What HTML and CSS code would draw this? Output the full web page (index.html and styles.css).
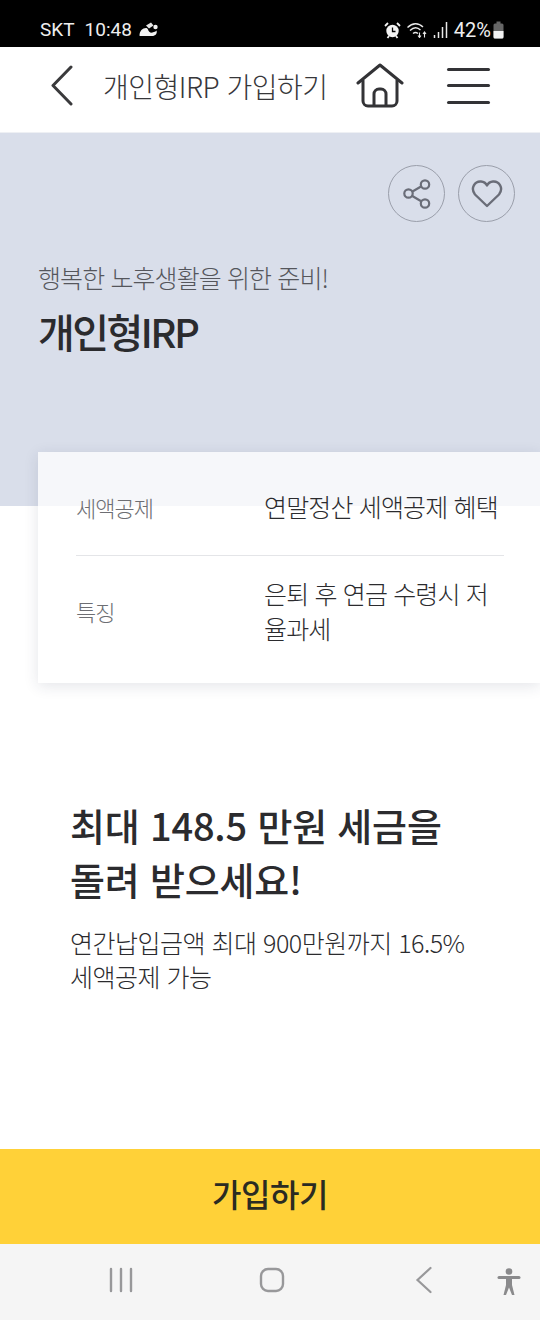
FILE: index.html
```html
<!DOCTYPE html>
<html lang="ko">
<head>
    <meta charset="UTF-8">
    <meta name="viewport" content="width=device-width, initial-scale=1.0">
    <title>개인형IRP 가입하기</title>
    <link rel="stylesheet" href="styles.css">
</head>
<body>
    <div class="status-bar">
        <div class="status-left">
            <span>SKT</span>
            <span>10:48</span>
            <svg class="status-cloud" width="20" height="15" viewBox="0 0 20 15">
                <path d="M0.500 13.500C0.500 9 3.500 6 7 6C8 6 8.500 6.500 9 7.500C9.500 10 11.500 11 13.500 10.500C15.500 10 16.500 9.500 17.500 8.500C18.500 11.500 16.500 14 13 14H2C1 14 0.500 14 0.500 13.500Z" fill="#f2f2f2"/>
                <path d="M7 3.500L12 0.500L14.500 3.500L10 6.500Z" fill="#e6e6e6"/>
                <circle cx="16.500" cy="5" r="2.200" fill="#f2f2f2"/>
            </svg>
        </div>
        <div class="status-right">
            <svg width="17" height="18" viewBox="0 0 17 18">
                <circle cx="8.500" cy="10" r="6.200" fill="#f2f2f2"/>
                <path d="M8.500 6.500V10.500H11.500" fill="none" stroke="#000" stroke-width="1.300"/>
                <path d="M1 5l3-3M16 5l-3-3M3.500 17l1.500-2M13.500 17l-1.500-2" stroke="#f2f2f2" stroke-width="1.800"/>
            </svg>
            <svg class="status-wifi" width="21" height="16" viewBox="0 0 21 16">
                <path d="M0.500 5.500C5.500 0.500 11.500 0.500 16 5M3 8.500C6.500 5 10.500 5 13.500 8M6 11.500C8 10 9 10 11 11.500" fill="none" stroke="#e8e8e8" stroke-width="1.400"/>
                <path d="M12.500 10.500v4.500M11 13.500l1.500 2 1.500-2M17.500 15.500v-5M16 12l1.500-2 1.500 2" fill="none" stroke="#e8e8e8" stroke-width="1.100"/>
            </svg>
            <svg class="status-signal" width="15" height="17" viewBox="0 0 15 17">
                <path d="M1.500 14v3M5.500 11v6M9.500 6v11M13.500 1v16" stroke="#e8e8e8" stroke-width="1.500"/>
            </svg>
            <span class="status-pct">42%</span>
            <svg class="status-battery" width="11" height="18" viewBox="0 0 11 18">
                <path d="M3.500 0.500h4v2h1.500a1.500 1.500 0 0 1 1.500 1.500v12a1.500 1.500 0 0 1-1.500 1.500h-7a1.500 1.500 0 0 1-1.500-1.500V4a1.500 1.500 0 0 1 1.500-1.500h1.500z" fill="#666"/>
                <path d="M0.500 10h10v6a1.500 1.500 0 0 1-1.500 1.500h-7a1.500 1.500 0 0 1-1.500-1.500z" fill="#f2f2f2"/>
            </svg>
        </div>
    </div>

    <header class="top-bar">
        <svg class="back-icon" width="24" height="42" viewBox="0 0 24 42">
            <path d="M21 2L3 20.500L21 39" fill="none" stroke="#3a3a3c" stroke-width="3" stroke-linecap="round" stroke-linejoin="round"/>
        </svg>
        <h1 class="top-title">개인형IRP 가입하기</h1>
        <svg class="home-icon" width="48" height="46" viewBox="0 0 48 46">
            <path d="M2 20L24 2L46 20" fill="none" stroke="#333336" stroke-width="3" stroke-linecap="round" stroke-linejoin="round"/>
            <path d="M7 17V38a5 5 0 0 0 5 5H36a5 5 0 0 0 5-5V17" fill="none" stroke="#333336" stroke-width="3"/>
            <path d="M18 43V31a5 5 0 0 1 5-5h2a5 5 0 0 1 5 5V43" fill="none" stroke="#333336" stroke-width="3"/>
        </svg>
        <div class="menu-icon">
            <span></span>
            <span></span>
            <span></span>
        </div>
    </header>

    <section class="hero">
        <div class="hero-actions">
            <div class="round-btn">
                <svg width="30" height="32" viewBox="0 0 30 32">
                    <circle cx="23" cy="6.500" r="4.200" fill="none" stroke="#6a6d78" stroke-width="2.200"/>
                    <circle cx="6.500" cy="15.500" r="4.200" fill="none" stroke="#6a6d78" stroke-width="2.200"/>
                    <circle cx="23" cy="25.500" r="4.200" fill="none" stroke="#6a6d78" stroke-width="2.200"/>
                    <path d="M10.500 13.500L19 8.500M10.300 18L19.200 23.300" stroke="#6a6d78" stroke-width="2.200"/>
                </svg>
            </div>
            <div class="round-btn">
                <svg width="32" height="30" viewBox="0 0 32 30">
                    <path d="M16 27L4 15.500C-1 9 4 2 10 2.500C13 2.700 15 4.500 16 6.500C17 4.500 19 2.700 22 2.500C28 2 33 9 28 15.500Z" fill="none" stroke="#6a6d78" stroke-width="2.400" stroke-linejoin="round"/>
                </svg>
            </div>
        </div>
        <p class="hero-sub">행복한 노후생활을 위한 준비!</p>
        <h2 class="hero-title">개인형IRP</h2>
    </section>

    <section class="info-card">
        <div class="info-row">
            <span class="info-label">세액공제</span>
            <span class="info-value">연말정산 세액공제 혜택</span>
        </div>
        <div class="info-row">
            <span class="info-label">특징</span>
            <span class="info-value">은퇴 후 연금 수령시 저율과세</span>
        </div>
    </section>

    <main class="promo">
        <h3>최대 148.5 만원 세금을<br>돌려 받으세요!</h3>
        <p>연간납입금액 최대 900만원까지 16.5%<br>세액공제 가능</p>
    </main>

    <button class="join-btn" type="button">가입하기</button>

    <nav class="nav-bar">
        <svg class="nav-recent" width="24" height="26" viewBox="0 0 24 26">
            <path d="M2 2v22M12 2v22M22 2v22" stroke="#98989a" stroke-width="2.400" stroke-linecap="round"/>
        </svg>
        <svg class="nav-home" width="26" height="26" viewBox="0 0 26 26">
            <rect x="2" y="2" width="22" height="22" rx="7" fill="none" stroke="#98989a" stroke-width="2.400"/>
        </svg>
        <svg class="nav-back" width="18" height="28" viewBox="0 0 18 28">
            <path d="M15.500 2L2.500 14L15.500 26" fill="none" stroke="#98989a" stroke-width="2.200" stroke-linecap="round"/>
        </svg>
        <svg class="nav-access" width="24" height="28" viewBox="0 0 24 28">
            <circle cx="12" cy="3.500" r="3.300" fill="#8a8a8c"/>
            <path d="M2 9.500H22" stroke="#8a8a8c" stroke-width="3" stroke-linecap="round"/>
            <path d="M9 10h6v7l2.500 10h-2.500L12 19.500L9 27H6.500L9 17z" fill="#8a8a8c"/>
        </svg>
    </nav>
</body>
</html>
```

FILE: styles.css
```css
html, body {
    margin: 0;
    padding: 0;
}

body {
    width: 540px;
    height: 1320px;
    display: flex;
    flex-direction: column;
    overflow: hidden;
    background-color: #fff;
    font-family: "Noto Sans CJK KR", "Noto Sans", sans-serif;
    color: #2b2b2e;
}

.status-bar {
    height: 47px;
    flex-shrink: 0;
    background-color: #000;
    color: #eee;
    display: flex;
    justify-content: space-between;
    align-items: center;
    padding: 12px 36px 0 40px;
    box-sizing: border-box;
    font-family: Roboto, sans-serif;
    font-size: 19px;
}

.status-left {
    display: flex;
    align-items: center;
    gap: 10px;
}

.status-cloud {
    margin-left: -3px;
}

.status-right {
    display: flex;
    align-items: center;
}

.status-wifi {
    margin-left: 6px;
}

.status-signal {
    margin-left: 5px;
}

.status-pct {
    margin-left: 6px;
    font-size: 20px;
}

.status-battery {
    margin-left: 2px;
}

.top-bar {
    height: 86px;
    flex-shrink: 0;
    display: flex;
    align-items: center;
    padding: 0 0 8px 50px;
    box-sizing: border-box;
    border-bottom: 1px solid #eef0f4;
}

.back-icon {
    flex-shrink: 0;
}

.top-title {
    margin: 0 0 0 29px;
    width: 254px;
    flex-shrink: 0;
    font-size: 28px;
    font-weight: 300;
    letter-spacing: -0.5px;
    white-space: nowrap;
    color: #37373a;
}

.home-icon {
    flex-shrink: 0;
    margin-left: -1px;
}

.menu-icon {
    margin-left: 43px;
    width: 43px;
    height: 36px;
    display: flex;
    flex-direction: column;
    justify-content: space-between;
}

.menu-icon span {
    height: 3px;
    border-radius: 2px;
    background-color: #333336;
}

.hero {
    height: 373px;
    flex-shrink: 0;
    padding: 32px 25px 0 38px;
    box-sizing: border-box;
    background-color: #d9deea;
}

.hero-actions {
    display: flex;
    justify-content: flex-end;
    gap: 13px;
}

.round-btn {
    width: 57px;
    height: 57px;
    border: 1.5px solid #9a9eaa;
    border-radius: 50%;
    box-sizing: border-box;
    display: flex;
    justify-content: center;
    align-items: center;
}

.hero-sub {
    margin: 36px 0 0;
    font-size: 25px;
    line-height: 38px;
    font-weight: 300;
    letter-spacing: -0.9px;
    color: #55565c;
}

.hero-title {
    margin: 9px 0 0;
    font-size: 40px;
    line-height: 52px;
    font-weight: 500;
    letter-spacing: -2.6px;
    color: #2b2b2e;
}

.info-card {
    margin: -54px 0 0 38px;
    height: 231px;
    flex-shrink: 0;
    padding: 0 36px 0 38px;
    box-sizing: border-box;
    background-color: rgba(255, 255, 255, 0.75);
    box-shadow: 0 3px 14px rgba(30, 40, 70, 0.12);
    position: relative;
}

.info-row {
    display: flex;
    align-items: center;
}

.info-row:first-child {
    height: 104px;
    padding-top: 6px;
    box-sizing: border-box;
    border-bottom: 1px solid #e4e5e8;
}

.info-row:last-child {
    height: 110px;
}

.info-label {
    width: 188px;
    flex-shrink: 0;
    font-size: 22px;
    font-weight: 300;
    letter-spacing: -1px;
    color: #6d6e73;
}

.info-value {
    font-size: 25px;
    line-height: 35px;
    font-weight: 300;
    letter-spacing: -0.85px;
    color: #2b2b2e;
    word-break: break-all;
}

.promo {
    flex: 1;
    padding: 115px 40px 0 70px;
}

.promo h3 {
    margin: 0;
    font-size: 38px;
    line-height: 54px;
    font-weight: 500;
    letter-spacing: -0.2px;
    color: #2b2b2e;
}

.promo p {
    margin: 19px 0 0;
    font-size: 25px;
    line-height: 34px;
    font-weight: 300;
    letter-spacing: -0.5px;
    color: #2b2b2e;
}

.join-btn {
    height: 95px;
    flex-shrink: 0;
    border: none;
    padding: 0 0 8px;
    background-color: #ffd138;
    font-family: inherit;
    font-size: 32px;
    font-weight: 500;
    letter-spacing: -0.5px;
    color: #2b2b22;
}

.nav-bar {
    height: 76px;
    flex-shrink: 0;
    background-color: #f5f5f5;
    display: flex;
    align-items: center;
    padding: 0 0 4px 109px;
    box-sizing: border-box;
}

.nav-home {
    margin-left: 126px;
}

.nav-back {
    margin-left: 130px;
}

.nav-access {
    margin-left: 64px;
    margin-top: 4px;
}
```
